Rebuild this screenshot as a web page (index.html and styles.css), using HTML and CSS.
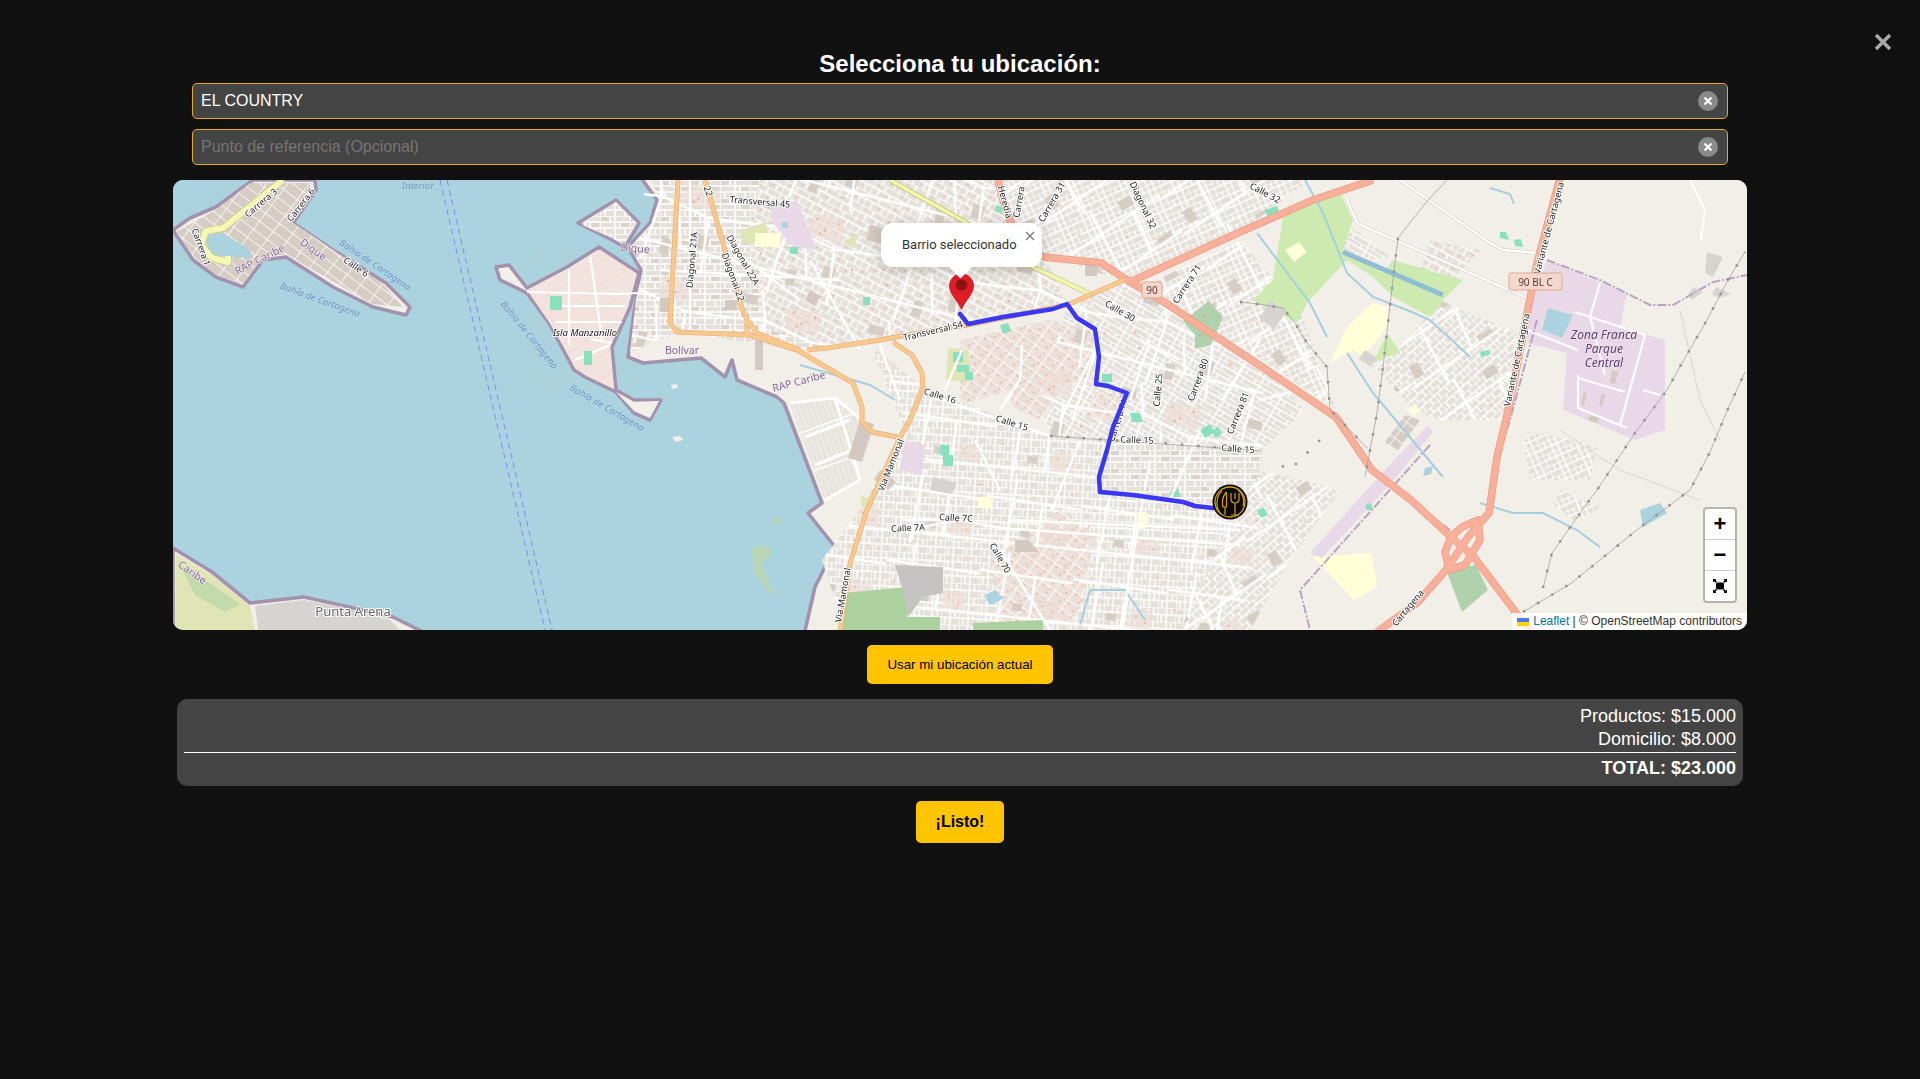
FILE: index.html
```html
<!DOCTYPE html>
<html lang="es">
<head>
<meta charset="utf-8">
<title>Selecciona tu ubicación</title>
<link rel="stylesheet" href="styles.css">
</head>
<body>
<button class="close" aria-label="Cerrar">
  <svg viewBox="0 0 18 18" width="18" height="18"><path class="close-x" d="M2 2L16 16M16 2L2 16"/></svg>
</button>
<main class="panel">
  <h2 class="title">Selecciona tu ubicación:</h2>
  <div class="fields">
    <div class="field">
      <input class="input" type="text" value="EL COUNTRY">
      <span class="clear"><svg viewBox="0 0 20 20" width="20" height="20"><path class="clear-x" d="M6.5 6.5L13.5 13.5M13.5 6.5L6.5 13.5"/></svg></span>
    </div>
    <div class="field">
      <input class="input" type="text" placeholder="Punto de referencia (Opcional)">
      <span class="clear"><svg viewBox="0 0 20 20" width="20" height="20"><path class="clear-x" d="M6.5 6.5L13.5 13.5M13.5 6.5L6.5 13.5"/></svg></span>
    </div>
  </div>

  <section class="map">
    <svg class="map-svg" viewBox="173 180 1574 450" width="1574" height="450">
      <defs>
        <pattern id="pa" width="30" height="18" patternUnits="userSpaceOnUse"><rect class="t-bg" width="30" height="18"/><rect class="t-bd" x="1" y="1" width="8" height="4"/><rect class="t-bd" x="21" y="7" width="8" height="4"/><path class="t-st" d="M0 0H30M0 6H30M0 12H30M0 0V18M10 0V6M20 6V12M5 12V18M15 0V18M25 12V18"/></pattern>
        <pattern id="pb" width="26" height="14" patternUnits="userSpaceOnUse" patternTransform="rotate(28)"><rect class="t-bg" width="26" height="14"/><path class="t-st" d="M0 0H26M0 7H26M0 0V14M13 0V7M8 7V14M20 7V14"/><circle class="t-dot" cx="5" cy="3" r=".7"/><circle class="t-dot" cx="16" cy="10" r=".7"/></pattern>
        <pattern id="pc" width="24" height="12" patternUnits="userSpaceOnUse" patternTransform="rotate(-24)"><rect class="t-bg" width="24" height="12"/><path class="t-st" d="M0 0H24M0 6H24M0 0V12M6 0V6M12 0V12M18 0V6M18 6V12"/></pattern>
        <pattern id="pd" width="18" height="14" patternUnits="userSpaceOnUse" patternTransform="rotate(3)"><rect class="t-bg" width="18" height="14"/><path class="t-st" d="M0 0H18M0 7H18M0 0V14M9 0V14M4 7V14M14 0V7"/></pattern>
        <pattern id="pe" width="20" height="12" patternUnits="userSpaceOnUse" patternTransform="rotate(-42)"><rect class="t-bg" width="20" height="12"/><path class="t-st" d="M0 0H20M0 6H20M0 0V12M10 0V6M5 6V12M15 6V12"/></pattern>
        <pattern id="pf" width="24" height="10" patternUnits="userSpaceOnUse" patternTransform="rotate(30)"><rect class="t-bg" width="24" height="10"/><path class="t-st" d="M0 0H24M0 5H24M6 0V5M18 5V10M12 0V10"/></pattern>
        <pattern id="pr" width="16" height="11" patternUnits="userSpaceOnUse" patternTransform="rotate(36)"><rect class="t-pink" width="16" height="11"/><path class="t-st" d="M0 0H16M0 0V11"/><circle class="t-dot" cx="4" cy="3" r=".8"/><circle class="t-dot" cx="11" cy="7" r=".8"/><circle class="t-dot" cx="13" cy="2" r=".7"/></pattern>
        <pattern id="pl" width="40" height="5" patternUnits="userSpaceOnUse" patternTransform="rotate(70)"><rect class="t-lot" width="40" height="5"/><path class="t-ln" d="M0 0H40"/><path class="t-st2" d="M0 0V5"/></pattern>
        <pattern id="pm" width="17" height="10" patternUnits="userSpaceOnUse" patternTransform="rotate(37)"><rect class="t-bd2" width="17" height="10"/><path class="t-st" d="M0 0H17M0 0V10"/></pattern>
        <pattern id="pz" width="20" height="14" patternUnits="userSpaceOnUse" patternTransform="rotate(58)"><path class="t-hatch" d="M0 0V14"/></pattern>
        <pattern id="ow1" width="130" height="96" patternUnits="userSpaceOnUse" patternTransform="rotate(14)"><rect class="o-bd" x="12" y="8" width="16" height="9"/><rect class="o-bd" x="84" y="58" width="12" height="14"/><rect class="o-bd" x="50" y="70" width="9" height="16"/><rect class="o-pk" x="60" y="10" width="34" height="22"/><path class="o-st" d="M0 36L40 30L90 40L130 36M30 0L40 30L34 96M90 40L96 96M0 76H130M60 40L70 76"/><circle class="t-dot" cx="66" cy="15" r=".9"/><circle class="t-dot" cx="76" cy="24" r=".9"/><circle class="t-dot" cx="88" cy="15" r=".9"/><circle class="t-dot" cx="72" cy="28" r=".9"/><circle class="t-dot" cx="12" cy="48" r=".9"/><circle class="t-dot" cx="20" cy="62" r=".9"/><circle class="t-dot" cx="112" cy="56" r=".9"/></pattern>
        <pattern id="ow2" width="110" height="84" patternUnits="userSpaceOnUse" patternTransform="rotate(-32)"><rect class="o-bd" x="70" y="8" width="14" height="10"/><rect class="o-bd" x="10" y="50" width="10" height="14"/><rect class="o-bd" x="84" y="60" width="16" height="8"/><path class="o-st" d="M0 28L110 24M42 0L36 84M0 70L110 66M80 24L74 66"/><circle class="t-dot" cx="20" cy="16" r=".8"/><circle class="t-dot" cx="60" cy="42" r=".8"/></pattern>
        <pattern id="ow3" width="94" height="74" patternUnits="userSpaceOnUse" patternTransform="rotate(6)"><rect class="o-bd" x="36" y="50" width="10" height="7"/><rect class="o-pk" x="60" y="44" width="22" height="18"/><path class="o-st" d="M0 20L94 24M28 0L22 74M0 64H94M56 22L54 64"/><circle class="t-dot" cx="66" cy="50" r=".8"/><circle class="t-dot" cx="76" cy="56" r=".8"/><circle class="t-dot" cx="10" cy="40" r=".8"/><circle class="t-dot" cx="84" cy="10" r=".8"/></pattern>
        <filter id="soft"><feGaussianBlur stdDeviation=".22"/></filter>
        <path id="t1" d="M1373 180L1313 200L1240 232L1130 282"/>
        <path id="t2" d="M998 180L1003 200L1010 220L1020 244L1044 257L1101 263L1124 278L1164 302L1262 367L1336 417L1372 470L1411 500L1451 537L1474 557L1514 610L1530 632"/>
        <path id="t3" d="M1560 178L1537 263L1509 407L1497 457L1489 513L1468 537L1446 570L1417 603L1377 632"/>
        <path id="t4" d="M1451 537L1462 527L1478 520L1480 540L1465 565L1449 570L1445 552Z"/>
        <path id="o1" d="M678 180L670 323L677 332L750 335L797 350L853 383L862 407L862 422L872 432L897 437"/>
        <path id="o2" d="M705 180L740 303L747 320L757 333L800 350M747 320V335"/>
        <path id="o3" d="M1124 280L1067 305L967 325L907 335L880 340L827 348L807 350"/>
        <path id="o4" d="M893 342L912 355L922 373L923 387L910 420L900 437L867 510L850 563L840 632"/>
        <path id="y1" d="M890 180L967 223L1033 267L1092 295"/>
        <path id="y2" d="M283 180L223 228L206 231L201 245L212 258L228 262L228 256"/>
        <path id="w1" d="M1343 190L1357 223L1527 298"/>
        <path id="w2" d="M1400 180L1490 243L1503 250L1538 253"/>
      </defs>
      <g class="soft">
        <rect class="water" x="173" y="180" width="1574" height="450"/>
        <!-- land -->
        <path class="land" d="M173 230L190 218L216 207L253 180L315 180L316 190L293 223L333 250L386 283L410 307L406 315L373 307L333 287L286 257L263 260L243 287L216 277L193 260Z"/>
        <path class="land" d="M496 267L509 265L527 288L567 267L599 247L639 273L630 307L612 347L616 390L634 400L661 400L650 420L634 413L616 392L585 377L574 370L549 323L527 293L500 280Z"/>
        <path class="land" d="M578 223L616 200L639 223L625 247L612 240Z"/>
        <path class="land" d="M639 175L657 200L650 223L628 247L641 270L634 313L628 357L643 363L701 358L725 377L732 360L737 380L777 397L784 403L822 503L808 513L835 547L815 587L804 635L1750 635L1750 175Z"/>
        <path class="land" d="M173 548L212 572L250 603L304 597L349 607L393 617L429 635L173 635Z"/>
        <path class="park-g" d="M176 554L212 575L250 606L255 630L175 630Z"/>
        <path class="marsh" d="M180 565L205 580L240 604L225 612L195 595Z"/>
        <path class="gray" d="M255 606L304 600L349 609L390 620L400 630L258 630Z"/>
        <path class="islet" d="M671 385l6 -1l1 4l-6 1z"/>
        <path class="islet" d="M672 437l8 -1l3 4l-7 2z"/>
        <path class="marsh" d="M752 548L766 546L773 552L762 564L772 590L782 595L768 592L753 570Z"/>
        <path class="marsh" d="M772 520l8 -3l3 6l-9 0z"/>
        <!-- Bocagrande and Manzanillo -->
        <path fill="url(#pm)" d="M216 210L250 183L312 183L292 222L382 283L403 307L372 304L286 254L263 257L243 284L216 275L195 258L176 232Z"/>
        <path class="water" d="M208 235L223 233L250 250L251 258L230 257L213 255L206 243Z"/>
        <path class="pink-l" d="M527 290L567 270L599 250L636 273L628 307L610 347L614 388L585 375L576 368L549 322Z"/>
        <rect class="hatch" x="530" y="250" width="110" height="140" fill="url(#pz)"/>
        <path class="islet" d="M616 392L634 402L659 401L650 418L634 411Z"/>
        <path class="rd-w" d="M527 292L620 294L638 293M569 270V345M590 255L602 340M550 306H625M555 322H622M575 360L610 345M590 339L612 343"/>
        <path class="pitch" d="M550 296h12v14h-12z"/>
        <path class="pitch" d="M584 351h8v14h-8z"/>
        <path fill="url(#pa)" d="M582 225L616 202L637 223L624 245L612 238Z"/>
        <!-- urban patchwork -->
        <path fill="url(#pa)" d="M652 180L830 180L830 345L800 350L677 332L630 352L636 300L643 270L630 247L652 223L659 200Z"/>
        <path fill="url(#pb)" d="M760 180L1000 180L1010 220L1044 257L1067 303L967 325L880 340L827 348L770 330L750 250Z"/>
        <path fill="url(#pc)" d="M1000 180L1310 180L1240 232L1130 282L1044 257L1010 220Z"/>
        <path fill="url(#pf)" d="M1067 305L1124 280L1262 367L1305 410L1262 450L1050 436L1040 400Z"/>
        <path fill="url(#pr)" d="M960 340L1050 320L1095 330L1095 380L1030 385L960 405Z"/>
        <path fill="url(#pr)" d="M1096 392L1127 395L1122 425L1085 415Z"/>
        <path fill="url(#pd)" d="M870 345L923 387L1050 436L1262 450L1262 470L1290 540L1240 630L845 630L822 560L860 510L905 430Z"/>
        <path fill="url(#pa)" d="M1105 437L1240 447L1262 452L1260 510L1100 490Z"/>
        <path fill="url(#pe)" d="M1235 512L1262 470L1340 490L1290 560L1250 630L1180 630Z"/>
        <path fill="url(#pc)" d="M1140 288L1240 240L1300 310L1336 410L1262 360Z"/>
        <path fill="url(#pr)" d="M990 560L1060 510L1095 540L1075 620L1000 625Z"/>
        <path fill="url(#pr)" d="M1020 370L1040 360L1060 400L1040 420L1010 405Z"/>
        <path fill="url(#ow1)" d="M640 180L1000 180L1010 220L1044 257L1067 303L967 325L880 340L827 348L800 350L677 332L630 352L636 300L643 270L630 247L652 223Z"/>
        <path fill="url(#ow2)" d="M1000 180L1310 180L1240 232L1130 282L1044 257L1010 220ZM1140 288L1240 240L1300 310L1336 410L1262 360Z"/>
        <path fill="url(#ow1)" d="M1067 305L1124 280L1262 367L1262 450L1050 436L1040 400Z"/>
        <path fill="url(#ow3)" d="M880 345L923 387L1050 436L1100 440L1100 490L1262 510L1240 630L845 630L822 560L860 510L905 430Z"/>
        <path fill="url(#ow2)" d="M1235 512L1262 470L1340 490L1290 560L1250 630L1180 630Z"/>
        <path fill="url(#pl)" d="M790 403L835 398L862 420L850 460L862 480L825 500Z"/>
        <path class="rd-w3" d="M790 403L835 398L862 420M805 437L850 420M815 465L852 450M825 500L860 480M835 398L860 480"/>
        <path class="pink-z" d="M1547 260L1627 293L1620 327L1665 340L1665 430L1635 440L1563 410L1567 353L1527 343L1530 307Z"/>
        <path class="pond" d="M1548 308L1573 315L1562 338L1542 330Z"/>
        <path class="rd-w" d="M1600 283L1590 317L1605 375M1575 312L1645 335M1527 330L1578 350M1578 378L1625 392M1578 375V408L1627 428M1645 335L1620 425M1643 390L1660 395"/>
        <path class="bd" d="M1590 415l10 3l-3 5l-9 -3z"/>
        <path class="bd" d="M1612 370l6 2l-3 12l-5 -1z"/>
        <path class="bd" d="M1584 392l3 1l-3 12l-3 -1z"/>
        <path class="bd" d="M1602 394l3 1l-3 12l-3 -1z"/>
        <path fill="url(#pe)" d="M1440 300L1517 333L1503 420L1433 420L1407 403L1373 367L1400 347Z"/>
        <path fill="url(#ow2)" d="M1440 300L1517 333L1503 420L1433 420L1407 403L1373 367L1400 347Z"/>
        <path fill="url(#pf)" d="M1340 220L1393 257L1340 262L1336 235Z"/>
        <path fill="url(#pc)" d="M1523 440L1540 433L1597 447L1590 480L1530 480Z"/>
        <path fill="url(#pc)" d="M1560 490L1600 507L1577 523L1552 505Z"/>
        <path fill="url(#pb)" d="M1430 240L1480 250L1450 283L1420 270Z"/>
        <path class="green" d="M1283 217L1340 193L1353 220L1343 250L1383 273L1393 260L1463 280L1443 300L1430 317L1393 297L1373 277L1347 260L1307 303L1297 323L1253 300L1273 280Z"/>
        <path class="green" d="M1373 363L1400 352L1387 333Z"/>
        <path class="cream" d="M1347 327L1373 303L1388 307L1387 327L1363 357L1353 350L1330 363Z"/>
        <path class="cream" d="M1285 250l14 -8l8 10l-13 10z"/>
        <path class="cream" d="M1313 557L1371 553L1377 587L1354 600Z"/>
        <path class="cream" d="M1408 410l6 -5l6 5l-6 6z"/>
        <path class="gray" d="M1270 300l16 12l-12 18l-14 -12z"/>
        <path class="gray" d="M1365 350l12 8l-6 9l-12 -8z"/>
        <path class="gray" d="M1707 252L1723 257L1713 277L1705 273Z"/>
        <path class="gray" d="M1693 287L1703 292L1692 300L1688 295Z"/>
        <path class="gray" d="M1716 287L1731 294L1719 298L1712 294Z"/>
        <path class="pink-z" d="M1385 470L1428 425L1433 432L1392 482L1322 558L1310 553Z"/>
        <path fill="url(#pm)" d="M1405 415L1420 420L1398 450L1385 442Z"/>
        <path class="park-d" d="M1446 570L1476 565L1488 590L1462 612Z"/>
        <!-- green and built-up patches -->
        <path class="golf" d="M843 593L907 587L907 617L940 617L940 630L843 630Z"/>
        <path class="airport" d="M895 565L943 567L943 593L923 597L908 617L903 590Z"/>
        <path class="golf" d="M973 623L1043 620L1043 630L973 630Z"/>
        <path class="pink-z" d="M905 440L925 445L922 475L900 470Z"/>
        <path class="gray" d="M933 477L957 483L952 494L930 490Z"/>
        <path class="pitch" d="M940 445h9v10h-9z"/>
        <path class="pitch" d="M943 455h10v11h-10z"/>
        <path class="park-g" d="M860 495L872 500L870 508L862 507Z"/>
        <path class="cream" d="M1138 512h9v16h-9z"/>
        <path class="cream" d="M978 497l13 0l1 11l-13 0z"/>
        <path class="park-g" d="M948 348L968 350L972 382L946 380Z"/>
        <path class="park-g" d="M742 230l24 -8l4 20l-28 2z"/>
        <path class="cream" d="M755 233h25v14h-25z"/>
        <path class="pink-z" d="M770 207L797 200L817 250L793 247L773 223Z"/>
        <path class="pond" d="M782 222l6 0l0 6l-6 0z"/>
        <path class="park-g" d="M843 243L857 233L855 248Z"/>
        <path class="bd" d="M810 290l10 6l-5 10l-10 -6z"/>
        <path class="bd" d="M725 300l12 0l0 10l-12 0z"/>
        <path class="bd" d="M660 298l12 0l0 14l-12 0z"/>
        <path class="bd" d="M755 340l8 0l0 30l-8 0z"/>
        <path class="bd" d="M870 225l20 5l-6 14l-18 -4z"/>
        <path class="bd" d="M1085 260l12 0l0 16l-12 0z"/>
        <path class="bd" d="M860 420l14 4l-12 38l-14 -4z"/>
        <path class="bd" d="M880 470l16 12l-8 8l-14 -10z"/>
        <path class="bd" d="M1015 540l14 0l10 12l-24 0z"/>
        <path class="park-d" d="M1195 335l-12 -14l26 -20l14 16l-12 28l-16 4z"/>
        <circle class="t-dot" cx="1196" cy="322" r="1"/>
        <circle class="t-dot" cx="1204" cy="316" r="1"/>
        <circle class="t-dot" cx="1208" cy="328" r="1"/>
        <circle class="t-dot" cx="1200" cy="335" r="1"/>
        <path class="pitch" d="M953 352h10v10h-10z"/>
        <path class="pitch" d="M957 365h12v7h-12z"/>
        <path class="pitch" d="M965 372h8v8h-8z"/>
        <path class="pitch" d="M790 247h8v7h-8z"/>
        <path class="pitch" d="M1000 325l8 -2l3 8l-8 3z"/>
        <path class="pitch" d="M1102 374h10v8h-10z"/>
        <path class="pitch" d="M1130 413l10 0l3 9l-11 0z"/>
        <path class="pitch" d="M1200 430l10 -6l5 8l-10 6z"/>
        <path class="pitch" d="M1212 432l6 -6l4 8l-6 4z"/>
        <path class="pitch" d="M1170 492l8 -3l3 8l-11 0z"/>
        <path class="pitch" d="M1257 510l7 -2l4 7l-7 3z"/>
        <path class="pitch" d="M863 297h7v8h-7z"/>
        <path class="pitch" d="M996 205l7 2l-1 7l-7 -3z"/>
        <path class="pitch" d="M1265 210l12 -4l3 8l-12 4z"/>
        <path class="pitch" d="M1500 232l6 0l3 8l-9 -2z"/>
        <path class="pitch" d="M1514 240l7 -1l2 8l-8 -1z"/>
        <path class="pitch" d="M1480 352l8 -2l3 4l-10 3z"/>
        <path class="pitch" d="M1365 505l6 -2l2 6l-6 2z"/>
        <path class="pond" d="M1640 510L1660 503L1667 513L1643 527Z"/>
        <path class="pond" d="M1425 468l8 -2l-2 8l-8 2z"/>
        <path class="pond" d="M985 595l10 -5l4 5l6 2l-6 4l-8 4l-4 -4z"/>
        <!-- rivers -->
        <path class="canal" d="M1343 252L1443 295"/>
        <path class="river" d="M1305 180L1323 213L1347 273L1373 297L1407 310L1430 320L1470 357"/>
        <path class="river" d="M1257 233L1310 303L1327 337"/>
        <path class="river" d="M1347 353L1373 393L1423 453L1443 477"/>
        <path class="river" d="M1480 503L1513 513L1543 513L1577 530L1600 547"/>
        <path class="river" d="M1490 188l20 6l4 10"/>
        <path class="river" d="M1080 625L1090 590L1125 590L1145 620"/>
        <path class="river" d="M800 365L870 385L895 400"/>
        <path class="river-w" d="M1690 180l15 30l-4 30"/>
        <!-- white roads -->
        <g class="rd-g"><use href="#w1"/><use href="#w2"/></g>
        <path class="rd-f" d="M1680 310L1700 400L1720 440M1560 430L1620 470L1700 500"/>
        <g class="rd-w2"><use href="#w1"/><use href="#w2"/></g>
        <path class="rd-w2" d="M1255 390L1240 447M1140 340L1180 360M1130 400L1150 340M1060 420L1100 340L1072 420M962 350L945 390M1022 345L1020 380L1000 410M1260 400L1300 390M1200 430L1170 500M1222 400L1260 340M1150 460L1120 630M1010 520L1240 530"/>
        <path class="rd-w2" d="M905 530L960 520L1000 528L1240 545M900 520L940 520M660 270L840 280M690 180L690 330M720 240L800 300M810 260L860 350M880 345L900 400M975 440L1000 490M1000 550L1050 630M1052 510L1080 440"/>
        <path class="rd-w2" d="M915 390L1000 420L1050 436"/>
        <!-- minor coloured -->
        <path class="dashed-p" d="M1547 260L1600 280L1650 305L1673 305L1713 282L1747 275"/>
        <path class="dashed-p" d="M1537 320L1510 420L1497 460"/>
        <path class="dashed-p" d="M1383 480L1450 530"/>
        <path class="dashed-p" d="M1430 445L1300 590L1310 630"/>
        <path class="dashed-b" d="M440 180L545 630M447 180L552 630"/>
        <!-- roads -->
        <g class="case-t"><use href="#t1"/><use href="#t2"/><use href="#t3"/><use href="#t4"/></g>
        <g class="fill-t"><use href="#t1"/><use href="#t2"/><use href="#t3"/><use href="#t4"/></g>
        <g class="case-y"><use href="#y1"/></g>
        <g class="fill-y"><use href="#y1"/></g>
        <g class="case-yw"><use href="#y2"/></g>
        <g class="fill-yw"><use href="#y2"/></g>
        <g class="case-o"><use href="#o1"/><use href="#o2"/><use href="#o3"/><use href="#o4"/></g>
        <g class="fill-o"><use href="#o1"/><use href="#o2"/><use href="#o3"/><use href="#o4"/></g>
        <!-- power lines -->
        <path class="power" d="M1543 588L1552 553L1588 502L1597 490L1635 433L1667 390L1682 363L1707 320L1728 280L1745 252M1523 612L1570 584L1600 560L1638 529L1690 490L1710 452L1727 411L1745 372M1398 238L1428 200L1447 180M1398 238L1393 280L1388 323L1383 367L1377 413L1365 477"/>
        <path class="power" d="M1240 302L1258 304L1283 308L1295 323L1307 343L1327 367L1330 410L1343 423L1367 448M1050 436L1262 451"/>
        <path class="power-d" d="M1240 302L1258 304L1283 308L1295 323L1307 343L1327 367L1330 410L1343 423L1367 448M1050 436L1079 438L1175 444L1225 448L1262 451M1320 440L1290 470L1270 460M1543 588L1552 553L1588 502L1597 490L1635 433L1667 390L1682 363L1707 320L1728 280L1745 252M1523 612L1570 584L1600 560L1638 529L1690 490L1710 452L1727 411L1745 372M1398 238L1393 280L1388 323L1383 367L1377 413L1365 477"/>
        <!-- labels -->
        <g class="lb-w">
          <text x="418" y="189">Interior</text>
          <text x="375" y="268" transform="rotate(34 375 265)">Bahía de Cartagena</text>
          <text x="320" y="303" transform="rotate(20 320 300)">Bahía de Cartagena</text>
          <text x="529" y="338" transform="rotate(51 529 335)">Bahía de Cartagena</text>
          <text x="607" y="411" transform="rotate(30 607 408)">Bahía de Cartagena</text>
        </g>
        <g class="lb-p">
          <text x="313" y="253" transform="rotate(35 313 250)">Dique</text>
          <text x="260" y="263" transform="rotate(-27 260 260)">RAP Caribe</text>
          <text x="635" y="252" transform="rotate(5 635 249)">Dique</text>
          <text x="682" y="354">Bolívar</text>
          <text x="799" y="385" transform="rotate(-15 799 382)">RAP Caribe</text>
          <text x="192" y="576" transform="rotate(35 192 573)">Caribe</text>
        </g>
        <text class="lb-i" x="585" y="336">Isla Manzanillo</text>
        <text class="lb-n" x="353" y="616">Punta Arena</text>
        <g class="lb-z">
          <text x="1604" y="339">Zona Franca</text>
          <text x="1604" y="353">Parque</text>
          <text x="1604" y="367">Central</text>
        </g>
        <g class="lb">
          <text x="261" y="206" transform="rotate(-40 261 203)">Carrera 3</text>
          <text x="301" y="208" transform="rotate(-52 301 205)">Carrera 6</text>
          <text x="201" y="250" transform="rotate(70 201 247)">Carrera 1</text>
          <text x="356" y="270" transform="rotate(35 356 267)">Calle 6</text>
          <text x="760" y="205" transform="rotate(5 760 202)">Transversal 45</text>
          <text x="692" y="263" transform="rotate(-85 692 260)">Diagonal 21A</text>
          <text x="743" y="263" transform="rotate(60 743 260)">Diagonal 22A</text>
          <text x="733" y="280" transform="rotate(70 733 277)">Diagonal 22</text>
          <text x="708" y="194" transform="rotate(70 708 191)">22</text>
          <text x="933" y="334" transform="rotate(-13 933 331)">Transversal 54</text>
          <text x="940" y="399" transform="rotate(17 940 396)">Calle 16</text>
          <text x="1012" y="426" transform="rotate(17 1012 423)">Calle 15</text>
          <text x="1137" y="443" transform="rotate(2 1137 440)">Calle 15</text>
          <text x="1238" y="452" transform="rotate(4 1238 449)">Calle 15</text>
          <text x="891" y="468" transform="rotate(-68 891 465)">Via Mamonal</text>
          <text x="843" y="598" transform="rotate(-80 843 595)">Via Mamonal</text>
          <text x="1120" y="314" transform="rotate(30 1120 311)">Calle 30</text>
          <text x="1187" y="287" transform="rotate(-57 1187 284)">Carrera 71</text>
          <text x="1158" y="393" transform="rotate(-85 1158 390)">Calle 25</text>
          <text x="1198" y="383" transform="rotate(-70 1198 380)">Carrera 80</text>
          <text x="1238" y="416" transform="rotate(-68 1238 413)">Carrera 81</text>
          <text x="1118" y="423" transform="rotate(-72 1118 420)">Carrera 71</text>
          <text x="956" y="521" transform="rotate(3 956 518)">Calle 7C</text>
          <text x="908" y="531" transform="rotate(-3 908 528)">Calle 7A</text>
          <text x="1000" y="561" transform="rotate(60 1000 558)">Calle 70</text>
          <text x="1052" y="205" transform="rotate(-60 1052 202)">Carrera 31</text>
          <text x="1143" y="208" transform="rotate(65 1143 205)">Diagonal 32</text>
          <text x="1265" y="196" transform="rotate(28 1265 193)">Calle 32</text>
          <text x="1005" y="205" transform="rotate(75 1005 202)">Heredia</text>
          <text x="1019" y="205" transform="rotate(-80 1019 202)">Carrera</text>
          <text x="1517" y="363" transform="rotate(-78 1517 360)">Variante de Cartagena</text>
          <text x="1549" y="231" transform="rotate(-75 1549 228)">Variante de Cartagena</text>
          <text x="1408" y="611" transform="rotate(-50 1408 608)">Cartagena</text>
        </g>
        <rect class="shield" x="1142" y="282" width="20" height="16" rx="2"/>
        <text class="shield-t" x="1152" y="294">90</text>
        <rect class="shield" x="1509" y="273" width="53" height="17" rx="2"/>
        <text class="shield-t" x="1535.5" y="285.5">90 BL C</text>
      </g>
      <!-- route -->
      <path class="route" d="M960 314L968 324L1003 317L1053 309L1067 304L1077 318L1095 329L1099 357L1096 384L1108 386L1127 393L1113 427L1107 450L1099 477L1100 492L1133 495L1183 502L1195 506L1213 508"/>
      <!-- pin -->
      <path class="pin" d="M961.5 310C957 300 949 294 949 286A12.5 12.5 0 0 1 974 286C974 294 966 300 961.5 310Z"/>
      <circle class="pin-dot" cx="961.5" cy="285" r="5.8"/>
      <!-- restaurant marker -->
      <circle class="mk-bg" cx="1230" cy="502" r="17.5"/>
      <circle class="mk-ring" cx="1230" cy="502" r="15"/>
      <path class="mk-ic" d="M1226.5 492C1222 497 1222 503 1223 507H1226.5V492M1225 507V515"/>
      <path class="mk-ic" d="M1231 493V499Q1231 503 1235 503Q1239 503 1239 499V493M1235 493V499M1235 503V515M1231 515H1239"/>
      <path class="mk-ic" d="M1222 491C1216 496 1215 508 1221 514M1238 490C1243 493 1244.5 500 1243 506"/>
    </svg>

    <div class="popup">
      <span class="popup-text">Barrio seleccionado</span>
      <span class="popup-close"><svg viewBox="0 0 10 10" width="10" height="10"><path class="popup-x" d="M1 1L9 9M9 1L1 9"/></svg></span>
      <span class="popup-tip"></span>
    </div>

    <div class="zoom">
      <button class="zoom-btn">+</button>
      <button class="zoom-btn">−</button>
      <button class="zoom-btn">
        <svg viewBox="0 0 16 16" width="16" height="16"><rect class="fs-c" x="4" y="4.5" width="8" height="7" rx="1.5"/><path class="fs-a" d="M1 1h3.5l-1.1 1.1l1.6 1.6l-1.2 1.2l-1.6 -1.6L1 4.5ZM15 1v3.5l-1.1 -1.1l-1.6 1.6l-1.2 -1.2l1.6 -1.6L11.5 1ZM1 15v-3.5l1.1 1.1l1.6 -1.6l1.2 1.2l-1.6 1.6L4.5 15ZM15 15h-3.5l1.1 -1.1l-1.6 -1.6l1.2 -1.2l1.6 1.6L15 11.5Z"/></svg>
      </button>
    </div>
    <div class="attrib">
      <svg class="flag" viewBox="0 0 12 8" width="12" height="8"><rect class="flag-b" width="12" height="4"/><rect class="flag-y" y="4" width="12" height="4"/></svg>
      <a class="attrib-link">Leaflet</a> | © OpenStreetMap contributors
    </div>
  </section>

  <button class="btn btn-loc">Usar mi ubicación actual</button>

  <section class="summary">
    <div class="sum-line">Productos: $15.000</div>
    <div class="sum-line">Domicilio: $8.000</div>
    <hr class="sum-rule">
    <div class="sum-line sum-total">TOTAL: $23.000</div>
  </section>

  <button class="btn btn-done">¡Listo!</button>
</main>
</body>
</html>
```

FILE: styles.css
```css
* { box-sizing: border-box; }
html, body { margin: 0; height: 100%; }
body {
  background: #111;
  font-family: "Liberation Sans", Arial, sans-serif;
  color: #fff;
  overflow: hidden;
  position: relative;
}
.close {
  position: absolute;
  top: 33px;
  right: 28px;
  width: 18px;
  height: 18px;
  padding: 0;
  border: 0;
  background: none;
  line-height: 0;
}
.close-x { stroke: #aaa; stroke-width: 3.4; fill: none; }
.panel {
  width: 1574px;
  margin: 0 auto;
  padding-top: 50px;
  display: flex;
  flex-direction: column;
  align-items: center;
}
.title {
  margin: 0 0 5px;
  font-size: 24px;
  line-height: 28px;
  font-weight: 700;
}
.fields {
  width: 1536px;
  display: flex;
  flex-direction: column;
  gap: 10px;
}
.field { position: relative; height: 36px; }
.input {
  display: block;
  width: 100%;
  height: 36px;
  padding: 0 36px 0 8px;
  background: #444;
  border: 1px solid #e6ae06;
  border-radius: 5px;
  color: #fff;
  font: 16px "Liberation Sans", Arial, sans-serif;
  outline: none;
}
.input::placeholder { color: #757575; opacity: 1; }
.clear {
  position: absolute;
  right: 10px;
  top: 8px;
  width: 20px;
  height: 20px;
  border-radius: 50%;
  background: #8a8a8a;
  line-height: 0;
}
.clear-x { stroke: #fff; stroke-width: 2.2; fill: none; }

/* map */
.map {
  position: relative;
  width: 1574px;
  height: 450px;
  margin-top: 15px;
  border-radius: 10px;
  overflow: hidden;
  background: #aad3df;
}
.map-svg { display: block; }
.soft { filter: url(#soft); }
.water { fill: #aad3df; stroke: none; }
.land { fill: #f2efe9; stroke: #a392ad; stroke-width: 3.6; stroke-linejoin: round; }
.islet { fill: #f2efe9; }
.marsh { fill: #bcd7ab; opacity: .8; }
.t-bg { fill: #e5e1da; }
.t-bd { fill: #dad4cb; }
.t-bd2 { fill: #d5ccc4; }
.t-pink { fill: #ebe1da; }
.t-lot { fill: #ece9e2; }
.t-ln { stroke: #d2cec7; stroke-width: .9; fill: none; }
.t-st { stroke: #fff; stroke-width: 1.5; fill: none; }
.t-st2 { stroke: #fff; stroke-width: 3; fill: none; }
.t-dot { fill: #ef8f78; }
.t-hatch { stroke: #ebb8ad; stroke-width: .8; fill: none; }
.o-bd { fill: #d6cec5; }
.o-pk { fill: #ecdcd5; opacity: .6; }
.o-st { stroke: #fff; stroke-width: 2.6; fill: none; }
.pink-l { fill: #f3e3de; }
.hatch { opacity: .6; }
.pink-z { fill: #e9d9e8; }
.pond { fill: #aad3df; }
.green { fill: #cdebb0; }
.cream { fill: #ffffd8; }
.gray { fill: #d6d4d0; }
.park-g { fill: #dfe5b4; }
.park-d { fill: #afd2ac; }
.golf { fill: #add19e; }
.airport { fill: #c6c3c3; }
.bd { fill: #d4c9c0; }
.pitch { fill: #88e0be; }
.canal { stroke: #8fbdd3; stroke-width: 5; fill: none; }
.river { stroke: #a5cfdf; stroke-width: 2; fill: none; }
.river-w { stroke: #fff; stroke-width: 2; fill: none; }
.rd-w { stroke: #fff; stroke-width: 2.2; fill: none; }
.rd-w3 { stroke: #fff; stroke-width: 3; fill: none; }
.rd-g { stroke: #cfcac2; stroke-width: 3.4; fill: none; }
.rd-f { stroke: #d8d4cc; stroke-width: .9; fill: none; }
.rd-w2 { stroke: #fff; stroke-width: 2.4; fill: none; }
.dashed-p { stroke: #b9a3c2; stroke-width: 2; stroke-dasharray: 9 2 2 2; fill: none; }
.dashed-b { stroke: #7a8cf0; stroke-width: 1; stroke-dasharray: 6 4; fill: none; }
.case-t { stroke: #ec9d85; stroke-width: 7.6; fill: none; stroke-linejoin: round; }
.fill-t { stroke: #f9b09a; stroke-width: 6; fill: none; stroke-linejoin: round; }
.case-o { stroke: #e3b070; stroke-width: 5; fill: none; stroke-linejoin: round; }
.fill-o { stroke: #f9c88f; stroke-width: 3.8; fill: none; stroke-linejoin: round; }
.case-y { stroke: #bdbf7d; stroke-width: 5; fill: none; stroke-linejoin: round; }
.fill-y { stroke: #f2f7ac; stroke-width: 3.6; fill: none; stroke-linejoin: round; }
.case-yw { stroke: #c8ca8a; stroke-width: 7.5; fill: none; stroke-linejoin: round; }
.fill-yw { stroke: #f4f8b4; stroke-width: 6; fill: none; stroke-linejoin: round; }
.power { stroke: #a3a19d; stroke-width: .8; fill: none; }
.power-d { stroke: #928f8c; stroke-width: 2.4; stroke-dasharray: 2.4 14; fill: none; }
.lb, .lb-w, .lb-p, .lb-i, .lb-n, .lb-z {
  font-family: "Noto Sans", sans-serif;
  text-anchor: middle;
  paint-order: stroke;
  stroke-linejoin: round;
}
.lb { font-size: 9px; fill: #1a1a1a; stroke: #fff; stroke-width: 2; }
.lb-w { font-size: 9.5px; font-style: italic; fill: #6b91c4; stroke: #b8dbe4; stroke-width: 1; }
.lb-p { font-size: 10.5px; fill: #86679a; stroke: #f2efe9; stroke-width: 1.2; }
.lb-i { font-size: 9.5px; font-style: italic; fill: #111; stroke: #fff; stroke-width: 1.5; }
.lb-n { font-size: 13px; fill: #666; stroke: #fff; stroke-width: 2; }
.lb-z { font-size: 12px; font-style: italic; fill: #5f3d6d; stroke: #f0e4ef; stroke-width: 1.2; }
.shield { fill: #f5d8cd; stroke: #dba995; stroke-width: 1; }
.shield-t { font: 10px "Noto Sans", sans-serif; fill: #5e3a32; text-anchor: middle; }
.route { fill: none; stroke: #3a38f5; stroke-width: 4.5; stroke-linejoin: round; stroke-linecap: round; }
.pin { fill: #de1e26; }
.pin-dot { fill: #8e1317; }
.mk-bg { fill: #0a0a0a; }
.mk-ring { fill: none; stroke: #d9a10c; stroke-width: 1.3; }
.mk-ic { fill: none; stroke: #d9a10c; stroke-width: 1.2; }

.popup {
  position: absolute;
  left: 708px;
  top: 43px;
  width: 161px;
  height: 44px;
  padding-left: 21px;
  background: #fff;
  border-radius: 12px;
  box-shadow: 0 3px 14px rgba(0, 0, 0, .2);
  display: flex;
  align-items: center;
}
.popup-text {
  position: relative;
  z-index: 1;
  font: 13px/18px Roboto, sans-serif;
  color: #333;
}
.popup-close {
  position: absolute;
  top: 8px;
  right: 7px;
  width: 10px;
  height: 10px;
  line-height: 0;
}
.popup-x { stroke: #777; stroke-width: 1.2; fill: none; }
.popup-tip {
  position: absolute;
  left: 71px;
  bottom: -8px;
  width: 17px;
  height: 17px;
  background: #fff;
  transform: rotate(45deg);
}
.zoom {
  position: absolute;
  right: 10px;
  top: 327px;
  width: 34px;
  background: #fff;
  border: 2px solid rgba(0, 0, 0, .25);
  border-radius: 4px;
  background-clip: padding-box;
  display: flex;
  flex-direction: column;
}
.zoom-btn {
  width: 30px;
  height: 31px;
  padding: 0;
  border: 0;
  border-bottom: 1px solid #ccc;
  background: none;
  color: #000;
  font: 700 22px/30px "Liberation Sans", Arial, sans-serif;
  display: flex;
  align-items: center;
  justify-content: center;
}
.zoom-btn:last-child { border-bottom: 0; height: 30px; }
.fs-c, .fs-a { fill: #000; }
.attrib {
  position: absolute;
  right: 0;
  bottom: 0;
  height: 17px;
  padding: 0 5px;
  background: rgba(255, 255, 255, .8);
  font-size: 12px;
  line-height: 17px;
  color: #333;
  white-space: nowrap;
}
.attrib-link { color: #0078a8; }
.flag { margin-right: 1px; vertical-align: -1px; }
.flag-b { fill: #4c7be1; }
.flag-y { fill: #ffd500; }

/* buttons + summary */
.btn {
  border: 0;
  border-radius: 5px;
  background: #ffc400;
  color: #000;
  font-family: "Liberation Sans", Arial, sans-serif;
}
.btn-loc {
  width: 186px;
  height: 39px;
  margin-top: 15px;
  font-size: 13.33px;
}
.btn-done {
  width: 88px;
  height: 42px;
  margin-top: 15px;
  font-size: 16px;
  font-weight: 700;
}
.summary {
  width: 1566px;
  height: 87px;
  margin-top: 15px;
  padding: 6px 7px 0;
  background: #444;
  border-radius: 10px;
  text-align: right;
}
.sum-line { font-size: 18px; line-height: 23px; }
.sum-rule {
  margin: 1px 0 4px;
  height: 1px;
  border: 0;
  background: #fff;
}
.sum-total { font-weight: 700; }
```
